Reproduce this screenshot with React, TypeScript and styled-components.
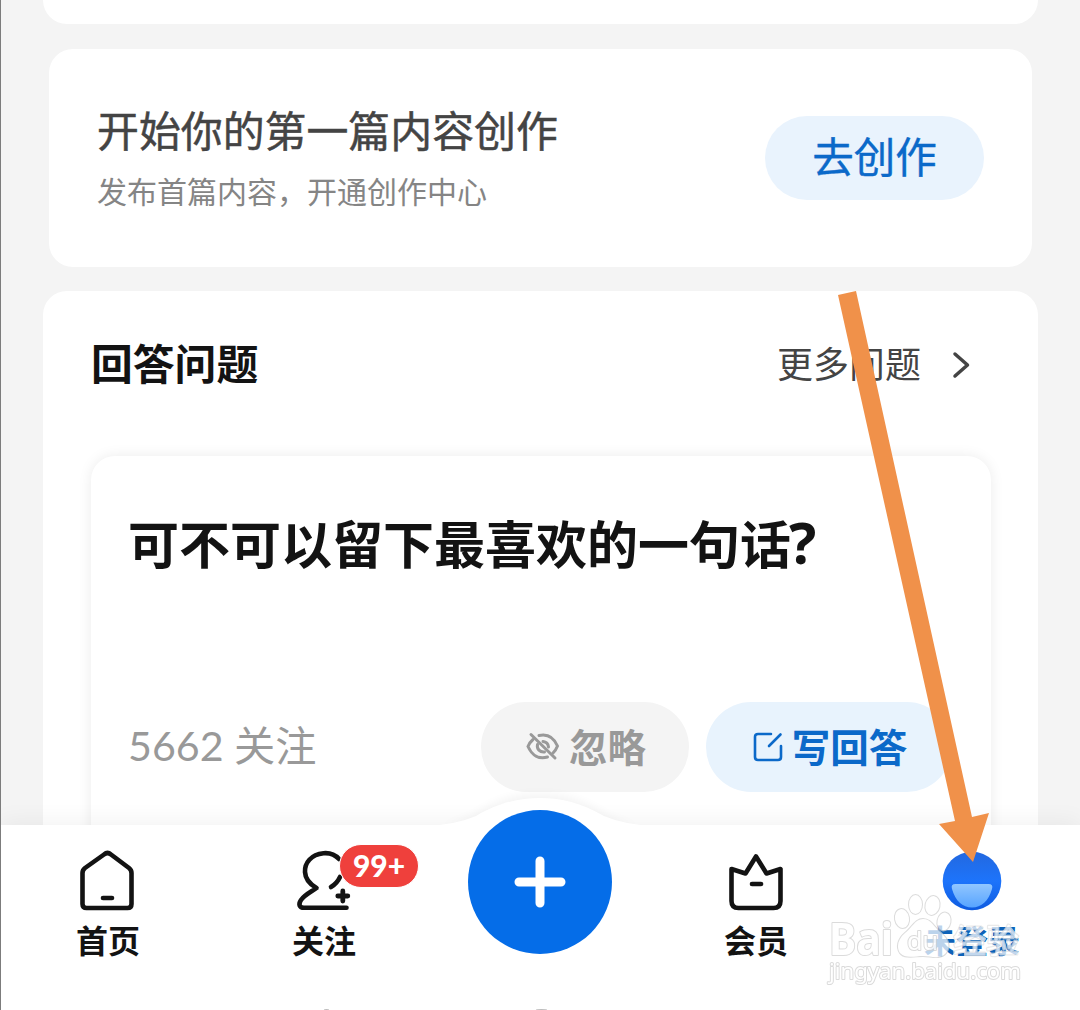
import React from 'react';
import styled, { createGlobalStyle } from 'styled-components';

const cjk = '"Noto Sans CJK SC", sans-serif';

const GlobalStyle = createGlobalStyle`
  * { box-sizing: border-box; }
  body { margin: 0; background: #f4f4f4; font-family: ${cjk}; }
`;

const Screen = styled.main`
  position: relative;
  width: 1080px;
  height: 1010px;
  overflow: hidden;
  border-left: 1px solid #7c7c7c;
  background: #f4f4f4;
  display: flex;
  flex-direction: column;
`;

const Feed = styled.div`
  height: 825px;
  flex: none;
  overflow: hidden;
  display: flex;
  flex-direction: column;
  align-items: center;
  gap: 25px;
`;

const Card = styled.section<{ $w: number; $h: number }>`
  flex: none;
  width: ${p => p.$w}px;
  height: ${p => p.$h}px;
  background: #fff;
  border-radius: 24px;
`;

const PreviousCard = styled(Card)`
  border-radius: 0 0 24px 24px;
`;

const StartCard = styled(Card)`
  display: flex;
  justify-content: space-between;
  align-items: flex-start;
  padding: 55px 48px 0;
`;

const StartTitle = styled.h2`
  margin: 0;
  font-size: 41.9px;
  line-height: 50px;
  font-weight: 400;
  color: #444;
  -webkit-text-stroke: 0.5px #444;
`;

const StartHint = styled.p`
  margin: 16px 0 0;
  font-size: 30px;
  line-height: 40px;
  color: #858585;
`;

const CreateButton = styled.button`
  margin-top: 12px;
  width: 219px;
  height: 84px;
  border: 0;
  padding: 0 0 6px;
  border-radius: 42px;
  background: #e9f3fd;
  color: #0b69c9;
  font: 400 41.5px/60px ${cjk};
  -webkit-text-stroke: 0.4px #0b69c9;
`;

const AnswerCard = styled(Card)`
  margin-top: -1px;
  padding: 41px 48px 0;
`;

const SectionHead = styled.header`
  height: 60px;
  display: flex;
  justify-content: space-between;
  align-items: center;
  svg { margin-top: 6px; }
`;

const SectionTitle = styled.h2`
  margin: 0;
  font-size: 41.8px;
  line-height: 60px;
  font-weight: 700;
  color: #131313;
`;

const MoreLink = styled.a`
  display: flex;
  align-items: center;
  gap: 31px;
  padding-right: 20px;
  font-size: 36px;
  line-height: 60px;
  color: #444;
`;

const QuestionCard = styled.article`
  margin-top: 64px;
  width: 900px;
  height: 470px;
  padding: 51px 37px 0;
  border-radius: 24px;
  background: #fff;
  box-shadow: 0 0 14px rgba(0, 0, 0, 0.08);
`;

const QuestionTitle = styled.h3`
  margin: 0;
  font-size: 51px;
  line-height: 70px;
  font-weight: 700;
  color: #131313;
  white-space: nowrap;
`;

const QuestionMark = styled.span`
  font-family: 'Noto Sans', sans-serif;
  font-weight: 700;
  font-size: 57px;
  line-height: 1;
  margin-left: -2px;
`;

const QuestionFoot = styled.footer`
  margin-top: 125px;
  display: flex;
  align-items: center;
  height: 90px;
`;

const Followers = styled.span`
  flex: none;
  width: 353px;
  font: 400 41.2px/60px Lato, ${cjk};
  color: #999;
  padding-bottom: 5px;
`;

const Pill = styled.button<{ $w: number; $bg: string; $fg: string }>`
  flex: none;
  display: flex;
  align-items: center;
  justify-content: center;
  gap: 9px;
  width: ${p => p.$w}px;
  height: 90px;
  margin-right: 17px;
  padding: 0 0 4px 2px;
  border: 0;
  border-radius: 45px;
  background: ${p => p.$bg};
  color: ${p => p.$fg};
  font: 700 38.5px/60px ${cjk};
  svg { flex: none; margin-top: 4px; }
`;

const TabBar = styled.nav`
  position: relative;
  flex: none;
  height: 185px;
  display: grid;
  grid-template-columns: repeat(5, 216px);
  margin-left: -1px;
  background: #fff;
  box-shadow: 0 -4px 22px rgba(0, 0, 0, 0.05);
  border-left: 1px solid #7c7c7c;
`;

const Hump = styled.svg`
  position: absolute;
  left: 409px;
  top: -60px;
`;

const Tab = styled.div`
  position: relative;
  margin-left: -1px;
  margin-right: 1px;
  display: flex;
  flex-direction: column;
  align-items: center;
  padding-top: 24px;
`;

const TabLabel = styled.span<{ $fg?: string }>`
  margin-top: 1px;
  font-size: 32px;
  line-height: 50px;
  font-weight: 700;
  color: ${p => p.$fg || '#131313'};
`;

const Badge = styled.span`
  position: absolute;
  left: 123px;
  top: 19px;
  width: 80px;
  height: 44px;
  border: 1px solid #fff;
  border-radius: 22px;
  background: #ef403c;
  color: #fff;
  text-align: center;
  font: 900 30px/40px Lato, sans-serif;
`;

const AddButton = styled.button`
  position: relative;
  margin-top: -39px;
  width: 144px;
  height: 144px;
  flex: none;
  border: 0;
  padding: 0;
  border-radius: 50%;
  background: #056de8;
  display: grid;
  place-items: center;
`;

const CutMark = styled.i<{ $x: number; $w: number; $h: number }>`
  position: absolute;
  left: ${p => p.$x}px;
  bottom: 0;
  width: ${p => p.$w}px;
  height: ${p => p.$h}px;
  border-radius: 50% 50% 0 0;
  background: #bdbdbd;
`;

const Arrow = styled.svg`
  position: absolute;
  left: 829px;
  top: 280px;
`;

const Watermark = styled.div`
  position: absolute;
  left: 820px;
  top: 885px;
  width: 220px;
  height: 110px;
`;

const HomeIcon = () => (
  <svg width="60" height="64" viewBox="0 0 60 64" fill="none" stroke="#131313" strokeWidth="4.600" strokeLinejoin="round" strokeLinecap="round">
    <path d="M4.500 24Q4.500 21 7 19L26 5.500Q29.500 2.500 33 5.500L51 19Q53.500 21 53.500 24V55Q53.500 59 49.500 59H8.500Q4.500 59 4.500 55Z" />
    <path d="M25 49H34" />
  </svg>
);

const FollowIcon = () => (
  <svg width="60" height="64" viewBox="0 0 60 64" fill="none" stroke="#131313" strokeWidth="4.600" strokeLinejoin="round" strokeLinecap="round">
    <path d="M45 10C41 5.500 35 3.700 29.500 4.200C17 5.500 10.500 14 11 23C11.300 30 15.500 35 22.500 39C17 43 11 45.500 7 51C4 55.500 5.500 58.800 10 58.800H52.500" />
    <path d="M37 38Q43 34.500 46 28" />
    <path d="M48.800 42V52M43.800 47H53.800" strokeWidth="4.800" />
  </svg>
);

const MemberIcon = () => (
  <svg width="60" height="64" viewBox="0 0 60 64" fill="none" stroke="#131313" strokeWidth="4.600" strokeLinejoin="round" strokeLinecap="round">
    <path d="M5.500 20L19.500 24.500L30 7.500L40.500 24.500L54.500 20V52Q54.500 59 47.500 59H12.500Q5.500 59 5.500 52Z" />
    <path d="M26 35H35" />
  </svg>
);

const AccountIcon = () => (
  <svg width="60" height="64" viewBox="0 0 60 64">
    <defs>
      <linearGradient id="ball" x1="0" y1="0" x2="0" y2="1">
        <stop offset="0" stopColor="#2368df" />
        <stop offset=".5" stopColor="#1d74fb" />
        <stop offset="1" stopColor="#0e5be0" />
      </linearGradient>
      <linearGradient id="smile" x1="0" y1="0" x2="0" y2="1">
        <stop offset="0" stopColor="#91c6ff" />
        <stop offset="1" stopColor="#57a4ff" />
      </linearGradient>
    </defs>
    <circle cx="30" cy="32" r="29.300" fill="url(#ball)" />
    <path d="M13.500 35H46.500Q51.500 35 50 40C46.500 52 39.500 58.500 30 58.500S13.500 52 10 40Q8.500 35 13.500 35Z" fill="url(#smile)" />
  </svg>
);

const HideIcon = () => (
  <svg width="34" height="30" viewBox="0 0 34 30" fill="none" stroke="#999" strokeWidth="3" strokeLinecap="round">
    <path d="M5 2.500L29 26" />
    <path d="M13 3.500C22 1.500 28 6 31.500 14Q30 18 27 21" />
    <path d="M7 7.500Q3.500 10.500 2 14.500C6 23.500 13 27.500 21.500 25" />
    <path d="M17 9.500Q22 10 22.500 15M11.500 12.500C10.500 17 14 20.500 18.500 20" />
  </svg>
);

const WriteIcon = () => (
  <svg width="30" height="30" viewBox="0 0 30 30" fill="none" stroke="#0b69c9" strokeWidth="2.600" strokeLinecap="round" strokeLinejoin="round">
    <path d="M18 2H5Q2 2 2 5V25Q2 28 5 28H25Q28 28 28 25V14" />
    <path d="M16 14L27.500 2.500" />
  </svg>
);

export default function App() {
  return (
    <>
      <GlobalStyle />
      <Screen>
        <Feed>
          <PreviousCard $w={995} $h={24} />
          <StartCard $w={983} $h={218}>
            <div>
              <StartTitle>开始你的第一篇内容创作</StartTitle>
              <StartHint>发布首篇内容，开通创作中心</StartHint>
            </div>
            <CreateButton>去创作</CreateButton>
          </StartCard>
          <AnswerCard $w={995} $h={650}>
            <SectionHead>
              <SectionTitle>回答问题</SectionTitle>
              <MoreLink>
                更多问题
                <svg width="18" height="28" viewBox="0 0 18 28" fill="none" stroke="#444" strokeWidth="3.500" strokeLinecap="round" strokeLinejoin="round">
                  <path d="M3 3L15.500 14L3 25" />
                </svg>
              </MoreLink>
            </SectionHead>
            <QuestionCard>
              <QuestionTitle>可不可以留下最喜欢的一句话<QuestionMark>?</QuestionMark></QuestionTitle>
              <QuestionFoot>
                <Followers>5662 关注</Followers>
                <Pill $w={208} $bg="#f4f4f4" $fg="#999"><HideIcon />忽略</Pill>
                <Pill $w={246} $bg="#e8f3fd" $fg="#0b69c9"><WriteIcon />写回答</Pill>
              </QuestionFoot>
            </QuestionCard>
          </AnswerCard>
        </Feed>

        <TabBar>
          <Hump width="260" height="120" viewBox="0 0 260 120">
            <defs>
              <filter id="humpShade" x="-10%" y="-20%" width="120%" height="140%">
                <feGaussianBlur stdDeviation="5" />
              </filter>
              <clipPath id="aboveBar"><rect width="260" height="60" /></clipPath>
            </defs>
            <g clipPath="url(#aboveBar)">
              <path d="M25 60Q48 59 66 49C90 33 110 29 130 29S170 33 194 49Q212 59 235 60Z" fill="#000" opacity=".045" filter="url(#humpShade)" />
            </g>
            <path d="M15 61Q45 60 66 51C90 37 110 33 130 33S170 37 194 51Q215 60 245 61Z" fill="#fff" />
          </Hump>
          <Tab><HomeIcon /><TabLabel>首页</TabLabel></Tab>
          <Tab><FollowIcon /><TabLabel>关注</TabLabel><Badge>99+</Badge></Tab>
          <Tab>
            <AddButton aria-label="add">
              <svg width="54" height="54" viewBox="0 0 54 54" stroke="#fff" strokeWidth="9" strokeLinecap="round">
                <path d="M27 6V48M6 27H48" />
              </svg>
            </AddButton>
          </Tab>
          <Tab><MemberIcon /><TabLabel>会员</TabLabel></Tab>
          <Tab><AccountIcon /><TabLabel $fg="#0d62b8">未登录</TabLabel></Tab>
          <CutMark $x={323} $w={5} $h={1} />
          <CutMark $x={535} $w={11} $h={1} />
        </TabBar>

        <Arrow width="180" height="600" viewBox="830 280 180 600">
          <path d="M838 295L856 291L972 817L989 813L973 862L939 824L955 821Z" fill="#f0914a" />
        </Arrow>

        <Watermark>
          <svg width="220" height="110" viewBox="821 885 220 110" fill="#fff" stroke="#cfcfcf" strokeWidth="2" paintOrder="stroke" strokeLinejoin="round">
            <g opacity=".72">
              <ellipse cx="902" cy="918.500" rx="7" ry="9.500" transform="rotate(-10 902 918.500)" />
              <ellipse cx="915.500" cy="904.500" rx="6.500" ry="9.500" />
              <ellipse cx="932.500" cy="905.500" rx="7" ry="9.500" transform="rotate(12 932.500 905.500)" />
              <ellipse cx="944" cy="921.500" rx="6.500" ry="9" transform="rotate(12 944 921.500)" />
              <path d="M923 919C915 919 912 928 905 933C898 939 896 947 900 953C905 959 915 956 923 956S940 960 946 953C951 946 948 939 941 933C934 927 931 919 923 919Z" />
            </g>
            <g opacity=".75">
              <text x="829" y="955" fontFamily="Noto Sans, sans-serif" fontWeight="700" fontSize="44" textLength="64" lengthAdjust="spacingAndGlyphs">Bai</text>
              <text x="907" y="950" fontFamily="Noto Sans, sans-serif" fontWeight="400" fontSize="26" textLength="31" lengthAdjust="spacingAndGlyphs">du</text>
              <text x="829" y="979" fontFamily="Noto Sans, sans-serif" fontSize="22.500" fontWeight="400" textLength="192" lengthAdjust="spacingAndGlyphs">jingyan.baidu.com</text>
            </g>
            <text x="953" y="953" opacity=".75" stroke="#e4e4e4" strokeWidth="2.400" fontFamily="Noto Sans CJK SC, sans-serif" fontSize="33" fontWeight="400">经验</text>
          </svg>
        </Watermark>
      </Screen>
    </>
  );
}
